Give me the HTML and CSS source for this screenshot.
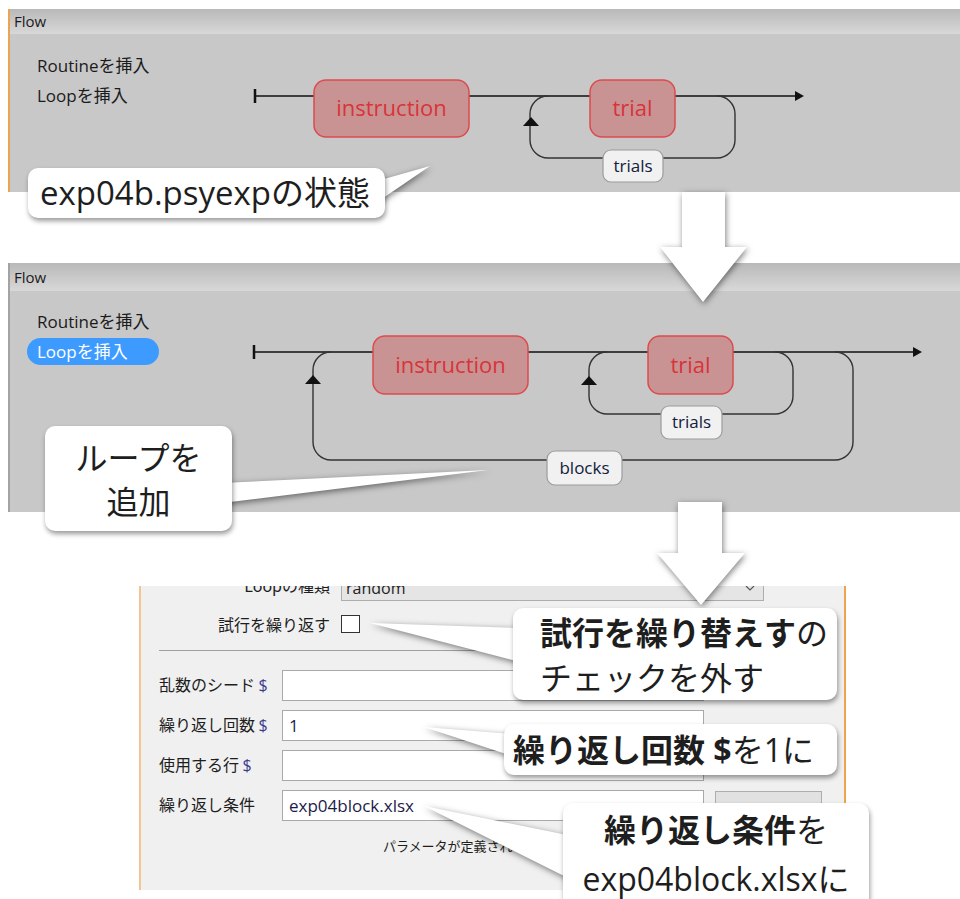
FILE: index.html
```html
<!DOCTYPE html>
<html lang="ja">
<head>
    <meta charset="UTF-8">
    <meta name="viewport" content="width=device-width, initial-scale=1.0">
    <title>Loopの追加</title>
    <link rel="stylesheet" href="styles.css">
</head>
<body>
    <div class="page">
        <!-- 1: exp04b.psyexp のFlow -->
        <section class="flow flow-first">
            <div class="flow-title">Flow</div>
            <ul class="flow-menu">
                <li class="menu-item">Routineを挿入</li>
                <li class="menu-item">Loopを挿入</li>
            </ul>
            <svg class="flow-canvas" width="952" height="183" viewBox="0 0 952 183">
                <line class="wire" x1="247" y1="87" x2="788" y2="87"/>
                <line class="wire-tick" x1="247" y1="80" x2="247" y2="94"/>
                <polygon class="wire-head" points="787,82 796,87 787,92"/>
                <path class="loop" d="M 540 87 A 18 18 0 0 0 522 105 L 522 131 A 18 18 0 0 0 540 149 L 709 149 A 18 18 0 0 0 727 131 L 727 105 A 18 18 0 0 0 709 87"/>
                <polygon class="wire-head" points="523,108 515,117 531,117"/>
                <rect class="node" x="306" y="71" width="155" height="57" rx="12"/>
                <text class="node-text" x="383.5" y="99.5" dy="0.35em">instruction</text>
                <rect class="node" x="582" y="71" width="85" height="57" rx="12"/>
                <text class="node-text" x="624.5" y="99.5" dy="0.35em">trial</text>
                <rect class="loop-pill" x="595" y="141" width="60" height="32" rx="8"/>
                <text class="loop-text" x="625" y="157" dy="0.35em">trials</text>
            </svg>
        </section>

        <!-- 2: Loopを挿入したあと -->
        <section class="flow flow-second">
            <div class="flow-title">Flow</div>
            <ul class="flow-menu">
                <li class="menu-item">Routineを挿入</li>
                <li class="menu-item menu-item-active">Loopを挿入</li>
            </ul>
            <svg class="flow-canvas" width="952" height="249" viewBox="0 0 952 249">
                <line class="wire" x1="246" y1="89" x2="906" y2="89"/>
                <line class="wire-tick" x1="246" y1="82" x2="246" y2="96"/>
                <polygon class="wire-head" points="905,84 914,89 905,94"/>
                <path class="loop" d="M 323 89 A 18 18 0 0 0 305 107 L 305 179 A 18 18 0 0 0 323 197 L 827 197 A 18 18 0 0 0 845 179 L 845 107 A 18 18 0 0 0 827 89"/>
                <polygon class="wire-head" points="305,112 297,121 313,121"/>
                <path class="loop" d="M 599 89 A 18 18 0 0 0 581 107 L 581 133 A 18 18 0 0 0 599 151 L 767 151 A 18 18 0 0 0 785 133 L 785 107 A 18 18 0 0 0 767 89"/>
                <polygon class="wire-head" points="581,113 573,122 589,122"/>
                <rect class="node" x="365" y="73" width="155" height="58" rx="12"/>
                <text class="node-text" x="442.5" y="102" dy="0.35em">instruction</text>
                <rect class="node" x="640" y="73" width="85" height="58" rx="12"/>
                <text class="node-text" x="682.5" y="102" dy="0.35em">trial</text>
                <rect class="loop-pill" x="653" y="143" width="61" height="33" rx="8"/>
                <text class="loop-text" x="683.5" y="159.5" dy="0.35em">trials</text>
                <rect class="loop-pill" x="539" y="188" width="75" height="34" rx="8"/>
                <text class="loop-text" x="576.5" y="205" dy="0.35em">blocks</text>
            </svg>
        </section>

        <!-- 3: ループのプロパティ -->
        <section class="dialog">
            <div class="dlg-row dlg-row-select">
                <span class="dlg-label">Loopの種類</span>
                <div class="dlg-select">
                    <span>random</span>
                    <svg class="dlg-chevron" width="10" height="6" viewBox="0 0 10 6"><path d="M1 1 L5 5 L9 1"/></svg>
                </div>
            </div>
            <div class="dlg-row dlg-row-check">
                <span class="dlg-label">試行を繰り返す</span>
                <span class="dlg-checkbox"></span>
            </div>
            <hr class="dlg-sep">
            <div class="dlg-fields">
                <label class="dlg-field-label">乱数のシード <span class="dollar">$</span></label>
                <div class="dlg-input"></div>
                <span></span>
                <label class="dlg-field-label">繰り返し回数 <span class="dollar">$</span></label>
                <div class="dlg-input">1</div>
                <span></span>
                <label class="dlg-field-label">使用する行 <span class="dollar">$</span></label>
                <div class="dlg-input"></div>
                <span></span>
                <label class="dlg-field-label">繰り返し条件</label>
                <div class="dlg-input">exp04block.xlsx</div>
                <button class="dlg-browse" aria-label="参照"></button>
            </div>
            <p class="dlg-note">パラメータが定義されていません</p>
        </section>
    </div>

    <!-- 矢印と吹き出しのしっぽ -->
    <svg class="overlay" width="960" height="899" viewBox="0 0 960 899">
        <g class="overlay-shapes">
            <polygon points="682,192 725,192 725,247 747,247 703,302 660,247 682,247"/>
            <polygon points="678,502 722,502 722,553 745,553 701,605 657,553 678,553"/>
            <polygon points="430,166 370,183 370,207"/>
            <polygon points="488,470 222,483 222,503"/>
            <polygon points="370,623 520,628 520,662"/>
            <polygon points="424,727 512,734 512,756"/>
            <polygon points="424,806 572,836 572,880"/>
        </g>
    </svg>

    <div class="callout callout-state">exp04b.psyexpの状態</div>
    <div class="callout callout-loop">ループを<br>追加</div>
    <div class="callout callout-check"><b>試行を繰り替えす</b>の<br>チェックを外す</div>
    <div class="callout callout-reps"><b>繰り返し回数 $</b>を1に</div>
    <div class="callout callout-cond"><b>繰り返し条件</b>を<br>exp04block.xlsxに</div>
</body>
</html>
```

FILE: styles.css
```css
body {
    margin: 0;
    width: 960px;
    height: 899px;
    overflow: hidden;
    position: relative;
    background: #fff;
    font-family: "Open Sans", "Noto Sans CJK JP", sans-serif;
    color: #1b1b1b;
}
.page {
    padding-top: 9px;
}

/* Flow panels */
.flow {
    position: relative;
    margin-left: 8px;
    border-left: 2px solid #e9a552;
    background: #c8c8c8;
}
.flow-first {
    height: 183px;
}
.flow-second {
    margin-top: 71px;
    height: 249px;
    border-left-color: #a3a3a3;
}
.flow-title {
    height: 25px;
    line-height: 25px;
    padding-left: 4px;
    font-size: 15px;
    background: linear-gradient(#b9b9b9, #d8d8d8);
}
.flow-second .flow-title {
    height: 28px;
    line-height: 28px;
}
.flow-menu {
    list-style: none;
    margin: 0;
    padding: 17px 0 0 27px;
    font-size: 17px;
}
.flow-second .flow-menu {
    padding-top: 16px;
}
.menu-item {
    height: 30px;
    line-height: 30px;
}
.menu-item-active {
    width: 112px;
    height: 27px;
    line-height: 27px;
    margin: 1px 0 0 -10px;
    padding: 0 10px;
    border-radius: 14px;
    background: #3d9bff;
    color: #fff;
}
.flow-canvas {
    position: absolute;
    top: 0;
    left: -2px;
}
.wire {
    stroke: #111;
    stroke-width: 1.5;
}
.wire-tick {
    stroke: #111;
    stroke-width: 2.5;
}
.wire-head {
    fill: #111;
}
.loop {
    fill: none;
    stroke: #333;
    stroke-width: 1.4;
}
.node {
    fill: #c99393;
    stroke: #dc4b4d;
    stroke-width: 1.5;
}
.node-text {
    font-family: "Open Sans", sans-serif;
    font-size: 22px;
    fill: #d8343a;
    text-anchor: middle;
}
.loop-pill {
    fill: #f1f1f1;
    stroke: #9c9c9c;
    stroke-width: 1.2;
}
.loop-text {
    font-family: "Open Sans", sans-serif;
    font-size: 17px;
    fill: #12203c;
    text-anchor: middle;
}

/* Loop dialog */
.dialog {
    margin: 74px 0 0 139px;
    width: 707px;
    height: 304px;
    box-sizing: border-box;
    padding-left: 18px;
    border-left: 2px solid #f4c592;
    border-right: 2px solid #f0a24c;
    background: #f0f0f0;
    overflow: hidden;
    font-family: "Noto Sans CJK JP", sans-serif;
    font-size: 16px;
    color: #1e1e1e;
}
.dlg-row {
    display: flex;
    align-items: center;
    gap: 11px;
    line-height: 18px;
}
.dlg-row-select {
    height: 26px;
    margin-top: -11px;
}
.dlg-row-check {
    height: 18px;
    margin-top: 14px;
}
.dlg-label {
    width: 171px;
    text-align: right;
}
.dlg-row-select .dlg-label {
    margin-top: -6px;
}
.dlg-select {
    width: 423px;
    height: 26px;
    box-sizing: border-box;
    display: flex;
    align-items: center;
    justify-content: space-between;
    padding: 0 8px 0 4px;
    background: #e5e5e5;
    border: 1px solid #adadad;
    font-family: "Open Sans", sans-serif;
}
.dlg-chevron path {
    fill: none;
    stroke: #555;
    stroke-width: 1.2;
}
.dlg-checkbox {
    width: 19px;
    height: 18px;
    box-sizing: border-box;
    border: 1px solid #333;
    background: #fff;
}
.dlg-sep {
    width: 670px;
    margin: 17px 0 0 0;
    border: none;
    border-top: 1px solid #a0a0a0;
    height: 0;
}
.dlg-fields {
    display: grid;
    grid-template-columns: 112px 422px 107px;
    grid-auto-rows: 31px;
    column-gap: 11px;
    row-gap: 9px;
    margin-top: 19px;
    align-items: center;
}
.dlg-field-label {
    margin-top: -4px;
    white-space: nowrap;
}
.dollar {
    color: #3b3b8f;
    font-family: "Open Sans", sans-serif;
}
.dlg-input {
    height: 31px;
    box-sizing: border-box;
    padding-left: 6px;
    line-height: 29px;
    background: #fff;
    border: 1px solid #a9a9a9;
    font-family: "Open Sans", sans-serif;
    font-size: 17px;
    color: #1c1c4a;
}
.dlg-browse {
    height: 30px;
    margin: 0;
    border: 1px solid #adadad;
    background: #e1e1e1;
}
.dlg-note {
    margin: 16px 0 0 224px;
    line-height: 18px;
    font-size: 13px;
}

/* overlay: arrows and callout tails */
.overlay {
    position: absolute;
    top: 0;
    left: 0;
    z-index: 5;
    pointer-events: none;
}
.overlay-shapes {
    fill: #fff;
    filter: drop-shadow(1px 2px 3px rgba(0, 0, 0, 0.5));
}
.callout {
    position: absolute;
    z-index: 6;
    box-sizing: border-box;
    background: #fff;
    border-radius: 10px;
    box-shadow: 1px 3px 5px rgba(0, 0, 0, 0.4);
    font-size: 32px;
    color: #1e1e1e;
    white-space: nowrap;
}
.callout b {
    font-weight: 700;
}
.callout-state {
    left: 28px;
    top: 168px;
    width: 357px;
    height: 50px;
    line-height: 50px;
    padding-left: 12px;
    font-size: 33px;
}
.callout-loop {
    left: 45px;
    top: 426px;
    width: 187px;
    height: 105px;
    padding-top: 10px;
    line-height: 44px;
    text-align: center;
}
.callout-check {
    left: 513px;
    top: 608px;
    width: 324px;
    height: 92px;
    padding: 2px 0 0 27px;
    line-height: 45px;
}
.callout-reps {
    left: 504px;
    top: 724px;
    width: 333px;
    height: 51px;
    line-height: 51px;
    padding-left: 9px;
}
.callout-cond {
    left: 563px;
    top: 803px;
    width: 306px;
    height: 104px;
    padding-top: 2px;
    line-height: 49px;
    text-align: center;
}
```
